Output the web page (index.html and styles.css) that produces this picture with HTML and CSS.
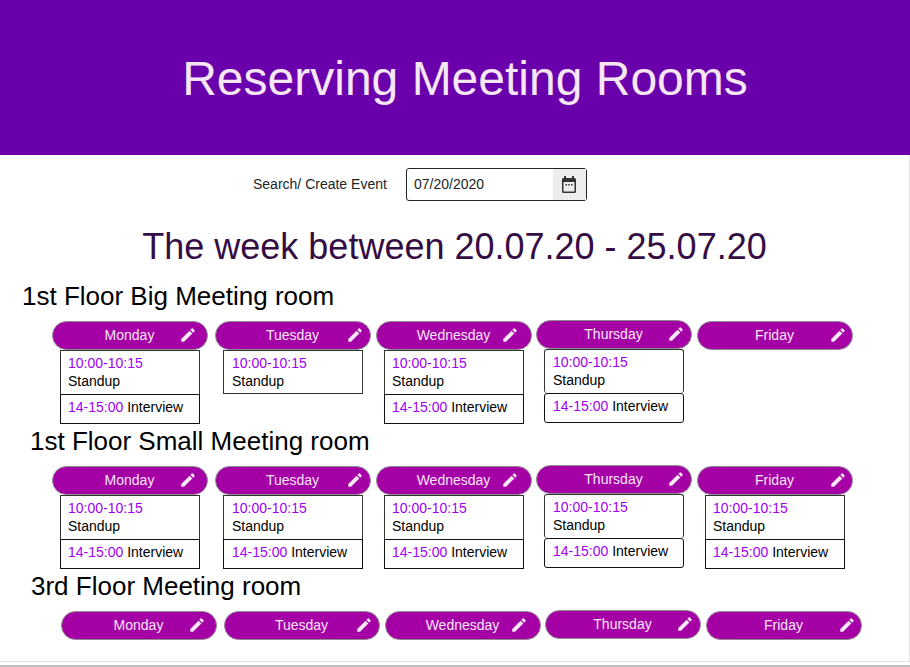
FILE: index.html
```html
<!DOCTYPE html>
<html lang="en">
<head>
    <meta charset="UTF-8">
    <meta name="viewport" content="width=device-width, initial-scale=1.0">
    <title>Reserving Meeting Rooms</title>
    <link rel="stylesheet" href="styles.css">
</head>
<body>
    <svg class="icon-defs" width="0" height="0">
        <symbol id="pencil" viewBox="0 0 24 24">
            <path d="M3 17.25V21h3.75L17.81 9.94l-3.75-3.75L3 17.25zM20.71 7.04a1 1 0 0 0 0-1.41l-2.34-2.34a1 1 0 0 0-1.41 0l-1.83 1.83 3.75 3.75 1.83-1.83z"/>
        </symbol>
    </svg>

    <header class="banner">
        <h1>Reserving Meeting Rooms</h1>
    </header>

    <main class="page">
        <form class="search">
            <label for="event-date">Search/ Create Event</label>
            <div class="date-field">
                <span id="event-date" class="date-value">07/20/2020</span>
                <span class="date-btn">
                    <svg width="14" height="17" viewBox="0 0 14 17">
                        <path fill="#333" d="M2 0h2v2h6V0h2v2h.5A1.500 1.500 0 0 1 14 3.500v12a1.500 1.500 0 0 1-1.500 1.500h-11A1.500 1.500 0 0 1 0 15.500v-12A1.500 1.500 0 0 1 1.500 2H2V0z"/>
                        <rect x="1.500" y="6" width="11" height="9.500" fill="#ededed"/>
                        <rect x="3.500" y="8" width="1.500" height="1.500" fill="#333"/>
                        <rect x="6.250" y="8" width="1.500" height="1.500" fill="#333"/>
                        <rect x="9" y="8" width="1.500" height="1.500" fill="#333"/>
                    </svg>
                </span>
            </div>
        </form>

        <h2 class="week">The week between 20.07.20 - 25.07.20</h2>

        <section class="room room-big">
            <h3>1st Floor Big Meeting room</h3>
            <div class="days">
                <div class="day">
                    <div class="pill">Monday<svg class="pen"><use href="#pencil"/></svg></div>
                    <div class="slot"><span class="time">10:00-10:15</span><br>Standup</div>
                    <div class="slot slot-short"><span class="time">14-15:00</span> Interview</div>
                </div>
                <div class="day day-tue">
                    <div class="pill">Tuesday<svg class="pen"><use href="#pencil"/></svg></div>
                    <div class="slot"><span class="time">10:00-10:15</span><br>Standup</div>
                </div>
                <div class="day day-wed">
                    <div class="pill">Wednesday<svg class="pen"><use href="#pencil"/></svg></div>
                    <div class="slot"><span class="time">10:00-10:15</span><br>Standup</div>
                    <div class="slot slot-short"><span class="time">14-15:00</span> Interview</div>
                </div>
                <div class="day day-thu">
                    <div class="pill">Thursday<svg class="pen"><use href="#pencil"/></svg></div>
                    <div class="slot"><span class="time">10:00-10:15</span><br>Standup</div>
                    <div class="slot slot-short"><span class="time">14-15:00</span> Interview</div>
                </div>
                <div class="day day-fri">
                    <div class="pill">Friday<svg class="pen"><use href="#pencil"/></svg></div>
                </div>
            </div>
        </section>

        <section class="room room-small">
            <h3>1st Floor Small Meeting room</h3>
            <div class="days">
                <div class="day">
                    <div class="pill">Monday<svg class="pen"><use href="#pencil"/></svg></div>
                    <div class="slot"><span class="time">10:00-10:15</span><br>Standup</div>
                    <div class="slot slot-short"><span class="time">14-15:00</span> Interview</div>
                </div>
                <div class="day day-tue">
                    <div class="pill">Tuesday<svg class="pen"><use href="#pencil"/></svg></div>
                    <div class="slot"><span class="time">10:00-10:15</span><br>Standup</div>
                    <div class="slot slot-short"><span class="time">14-15:00</span> Interview</div>
                </div>
                <div class="day day-wed">
                    <div class="pill">Wednesday<svg class="pen"><use href="#pencil"/></svg></div>
                    <div class="slot"><span class="time">10:00-10:15</span><br>Standup</div>
                    <div class="slot slot-short"><span class="time">14-15:00</span> Interview</div>
                </div>
                <div class="day day-thu">
                    <div class="pill">Thursday<svg class="pen"><use href="#pencil"/></svg></div>
                    <div class="slot"><span class="time">10:00-10:15</span><br>Standup</div>
                    <div class="slot slot-short"><span class="time">14-15:00</span> Interview</div>
                </div>
                <div class="day day-fri">
                    <div class="pill">Friday<svg class="pen"><use href="#pencil"/></svg></div>
                    <div class="slot"><span class="time">10:00-10:15</span><br>Standup</div>
                    <div class="slot slot-short"><span class="time">14-15:00</span> Interview</div>
                </div>
            </div>
        </section>

        <section class="room room-third">
            <h3>3rd Floor Meeting room</h3>
            <div class="days">
                <div class="day">
                    <div class="pill">Monday<svg class="pen"><use href="#pencil"/></svg></div>
                </div>
                <div class="day day-tue">
                    <div class="pill">Tuesday<svg class="pen"><use href="#pencil"/></svg></div>
                </div>
                <div class="day day-wed">
                    <div class="pill">Wednesday<svg class="pen"><use href="#pencil"/></svg></div>
                </div>
                <div class="day day-thu">
                    <div class="pill">Thursday<svg class="pen"><use href="#pencil"/></svg></div>
                </div>
                <div class="day day-fri">
                    <div class="pill">Friday<svg class="pen"><use href="#pencil"/></svg></div>
                </div>
            </div>
        </section>
    </main>

    <footer class="edge"></footer>
</body>
</html>
```

FILE: styles.css
```css
html, body {
    height: 100%;
}
body {
    font-family: "Liberation Sans", Arial, sans-serif;
    margin: 0;
    background-color: white;
    color: black;
    overflow: hidden;
}
.icon-defs {
    position: absolute;
}
.banner {
    height: 155px;
    box-sizing: border-box;
    padding: 3px 0 0 20px;
    background-color: #6a00ab;
    display: flex;
    align-items: center;
    justify-content: center;
}
.banner h1 {
    margin: 0;
    font-size: 48px;
    font-weight: normal;
    line-height: 56px;
    color: #f6e6f6;
}
.page {
    height: 506px;
    box-sizing: border-box;
    border-right: 1px solid #e8e8e8;
}
.search {
    display: flex;
    align-items: center;
    padding: 13px 0 0 253px;
    font-size: 14px;
    color: #212529;
}
.search label {
    width: 153px;
    margin-bottom: 2px;
}
.date-field {
    width: 179px;
    height: 31px;
    border: 1px solid #212529;
    border-radius: 3px;
    display: flex;
    align-items: center;
    justify-content: space-between;
    font-size: 14px;
}
.date-value {
    padding-left: 7px;
    margin-bottom: 2px;
}
.date-btn {
    box-sizing: border-box;
    width: 33px;
    height: 100%;
    padding-right: 1px;
    background-color: #ededed;
    display: flex;
    align-items: center;
    justify-content: center;
}
.week {
    margin: 24px 0 0;
    font-size: 36px;
    font-weight: normal;
    line-height: 44px;
    text-align: center;
    color: #350d45;
}
.room h3 {
    margin: 0;
    font-size: 26px;
    font-weight: normal;
    line-height: 30px;
}
.days {
    display: flex;
    align-items: flex-start;
    margin-top: 10px;
}
.day {
    width: 156px;
    flex: none;
}
.day-tue {
    margin-left: 7px;
}
.day-wed {
    margin-left: 5px;
}
.day-thu {
    margin: -1px 0 0 4px;
}
.day-fri {
    margin-left: 5px;
}
.room-big {
    height: 145px;
    padding: 12px 0 0 22px;
}
.room-big .days {
    margin-left: 30px;
}
.room-small {
    height: 145px;
    padding-left: 30px;
}
.room-small .days {
    margin-left: 22px;
}
.room-third {
    padding-left: 31px;
}
.room-third .days {
    margin-left: 30px;
}
.pill {
    position: relative;
    box-sizing: border-box;
    height: 29px;
    padding-right: 1px;
    border: 1px solid #8f8f8f;
    border-radius: 15px;
    background-color: #a500a5;
    color: #f6e6f6;
    font-size: 14px;
    line-height: 27px;
    text-align: center;
}
.pen {
    position: absolute;
    right: 10px;
    top: 4px;
    width: 18px;
    height: 18px;
    fill: #f6e6f6;
}
.day-tue .pen, .day-thu .pen {
    right: 6px;
}
.day-fri .pen {
    right: 5px;
}
.day-wed .pen {
    right: 12px;
}
.slot {
    box-sizing: border-box;
    width: 140px;
    height: 44px;
    margin-left: 8px;
    padding: 3px 7px 0;
    border: 1px solid #333;
    border-bottom-width: 0;
    font-size: 14px;
    line-height: 18px;
}
.day-tue .slot, .day-thu .slot {
    padding-left: 8px;
}
.slot-short {
    height: 30px;
    border-color: #111;
}
.slot:last-child {
    border-bottom-width: 1px;
}
.day-thu .slot {
    border-radius: 3px;
}
.time {
    color: #a000f0;
}
.edge {
    height: 6px;
    box-sizing: border-box;
    border-top: 1px solid #e2e2e2;
    border-bottom: 2px solid #bfbfbf;
}
```
